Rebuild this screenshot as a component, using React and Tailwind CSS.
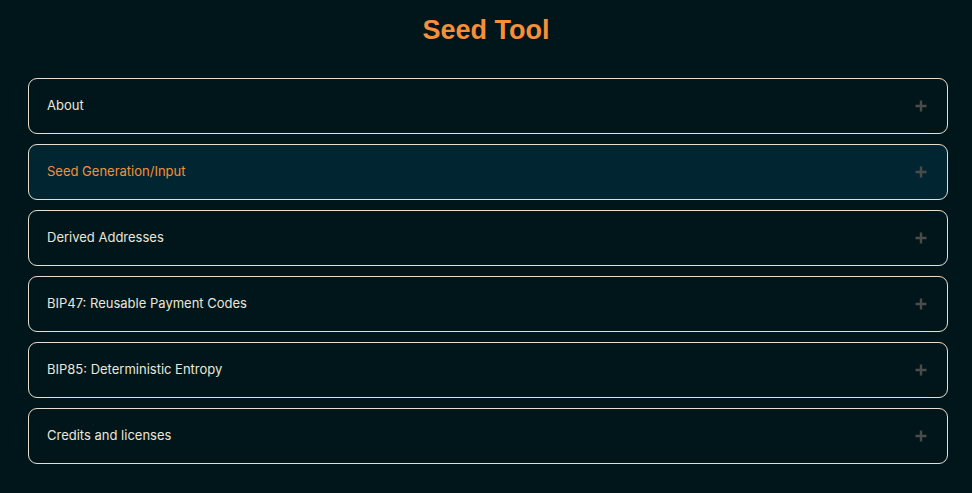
import { useState } from "react";

const sections = [
  "About",
  "Seed Generation/Input",
  "Derived Addresses",
  "BIP47: Reusable Payment Codes",
  "BIP85: Deterministic Entropy",
  "Credits and licenses",
];

function PlusIcon() {
  return (
    <svg width="12" height="12" viewBox="0 0 12 12" className="text-[#4b4b4b]">
      <path d="M6 0.5v11M0.5 6h11" stroke="currentColor" strokeWidth="2.4" />
    </svg>
  );
}

export default function App() {
  const [active, setActive] = useState(1);

  return (
    <div className="min-h-screen bg-[#00161a] pb-8 font-['Inter','Liberation_Sans',sans-serif]">
      <h1 className="pt-[14px] pb-[32px] text-center text-[27px] leading-[32px] font-bold text-[#f78f38] font-['Liberation_Sans',Arial,sans-serif]">
        Seed Tool
      </h1>

      <div className="ml-[28px] mr-[24px] flex flex-col gap-[10px]">
        {sections.map((title, i) => (
          <button
            key={title}
            onClick={() => setActive(i)}
            className={`flex h-[56px] w-full items-center justify-between rounded-[9px] border border-[#e6dfcf] pl-[18px] pr-[20px] text-left text-[13px] ${
              active === i
                ? "bg-[#022631] text-[#f78f38]"
                : "bg-[#00161a] text-[#ebe6da]"
            }`}
          >
            <span>{title}</span>
            <PlusIcon />
          </button>
        ))}
      </div>
    </div>
  );
}
